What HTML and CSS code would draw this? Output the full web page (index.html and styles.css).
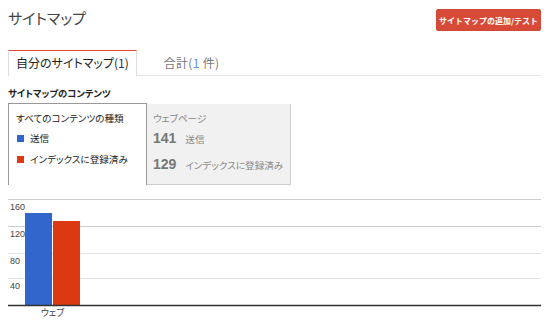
FILE: index.html
```html
<!DOCTYPE html>
<html>
<head>
    <title>サイトマップ</title>
    <link rel="stylesheet" href="styles.css">
</head>
<body>
    <div class="page">
        <div class="header">
            <h1>サイトマップ</h1>
            <button class="add-btn">サイトマップの追加/テスト</button>
        </div>

        <div class="tabs">
            <div class="tab active">自分のサイトマップ(<span class="count">1</span>)</div>
            <div class="tab">合計(<span class="count">1</span> 件)</div>
        </div>

        <h3 class="section-title">サイトマップのコンテンツ</h3>

        <div class="content-boxes">
            <div class="type-box">
                <div class="type-title">すべてのコンテンツの種類</div>
                <div class="legend-item"><span class="swatch blue"></span>送信</div>
                <div class="legend-item"><span class="swatch red"></span>インデックスに登録済み</div>
            </div>
            <div class="stat-box">
                <div class="stat-title">ウェブページ</div>
                <div class="stat-row"><span class="stat-num">141</span>送信</div>
                <div class="stat-row"><span class="stat-num">129</span>インデックスに登録済み</div>
            </div>
        </div>

        <svg class="chart" width="533" height="128" viewBox="0 0 533 128">
            <line x1="0" y1="4.5" x2="533" y2="4.5" stroke="#cccccc"/>
            <line x1="0" y1="31.5" x2="533" y2="31.5" stroke="#cccccc"/>
            <line x1="0" y1="58.5" x2="533" y2="58.5" stroke="#e3e3e3"/>
            <line x1="0" y1="83.5" x2="533" y2="83.5" stroke="#e3e3e3"/>
            <text x="2" y="15" class="axis">160</text>
            <text x="2" y="42" class="axis">120</text>
            <text x="2" y="69" class="axis">80</text>
            <text x="2" y="94" class="axis">40</text>
            <rect x="17" y="18" width="27" height="92" fill="#3366cc"/>
            <rect x="45" y="26" width="27" height="84" fill="#dc3912"/>
            <line x1="0" y1="110.5" x2="533" y2="110.5" stroke="#333333" stroke-width="1.5"/>
            <text x="44.5" y="121" class="axis" text-anchor="middle">ウェブ</text>
        </svg>
    </div>
</body>
</html>
```

FILE: styles.css
```css
body {
    margin: 0;
    font-family: "Noto Sans CJK JP", "Liberation Sans", sans-serif;
    font-feature-settings: "palt";
    color: #222;
    background: white;
}
.page {
    width: 533px;
    padding: 8px;
}
.header {
    display: flex;
    justify-content: space-between;
    align-items: flex-start;
}
.header h1 {
    margin: 0;
    font-size: 15px;
    font-weight: normal;
    line-height: 19px;
    color: #444;
}
.add-btn {
    margin-top: 1px;
    width: 105px;
    height: 22px;
    padding: 0;
    background-color: #d84a38;
    border: 1px solid #d14836;
    border-radius: 2px;
    color: white;
    font-family: inherit;
    font-size: 8px;
    font-weight: bold;
    cursor: pointer;
}
.tabs {
    display: flex;
    margin-top: 19px;
    height: 25px;
    border-bottom: 1px solid #e5e5e5;
}
.tab {
    padding: 0 27px;
    font-size: 12px;
    line-height: 25px;
    color: #777;
    letter-spacing: 0.3px;
}
.tab .count {
    color: #5b8ff9;
}
.tab.active {
    padding: 0 7px;
    height: 25px;
    background: white;
    border-top: 1px solid #dd4b39;
    border-left: 1px solid #ddd;
    border-right: 1px solid #ddd;
    margin-bottom: -1px;
    line-height: 24px;
    color: #222;
    letter-spacing: 0;
}
.tab.active .count {
    color: #1d2a8c;
}
.section-title {
    margin: 10px 0 3px;
    font-size: 9.3px;
    line-height: 14px;
    font-weight: bold;
}
.content-boxes {
    display: flex;
    height: 82px;
}
.type-box {
    width: 130px;
    padding: 7px 0 0 7px;
    border: 1px solid #999;
    border-bottom: none;
    background: white;
    font-size: 9.6px;
}
.type-title {
    line-height: 14px;
    margin-bottom: 6px;
}
.legend-item {
    display: flex;
    align-items: center;
    height: 14px;
    margin-bottom: 7px;
    margin-left: 1px;
}
.swatch {
    width: 7px;
    height: 7px;
    margin-right: 6px;
}
.swatch.blue {
    background: #3366cc;
}
.swatch.red {
    background: #dc3912;
}
.stat-box {
    width: 137px;
    margin-top: 1px;
    padding: 7px 0 0 6px;
    background: #f1f1f1;
    border-right: 1px solid #ccc;
    border-bottom: 1px solid #ccc;
    color: #888;
    font-size: 9.6px;
}
.stat-title {
    line-height: 14px;
    margin-bottom: 5px;
}
.stat-row {
    display: flex;
    align-items: baseline;
    height: 20px;
    margin-bottom: 6px;
    font-size: 9.6px;
}
.stat-num {
    font-family: "Liberation Sans", sans-serif;
    font-size: 14px;
    font-weight: bold;
    color: #777;
    margin-right: 9px;
}
.chart {
    display: block;
    margin-top: 10px;
}
.axis {
    font-family: "Liberation Sans", "Noto Sans CJK JP", sans-serif;
    font-size: 9px;
    fill: #444;
}
```
